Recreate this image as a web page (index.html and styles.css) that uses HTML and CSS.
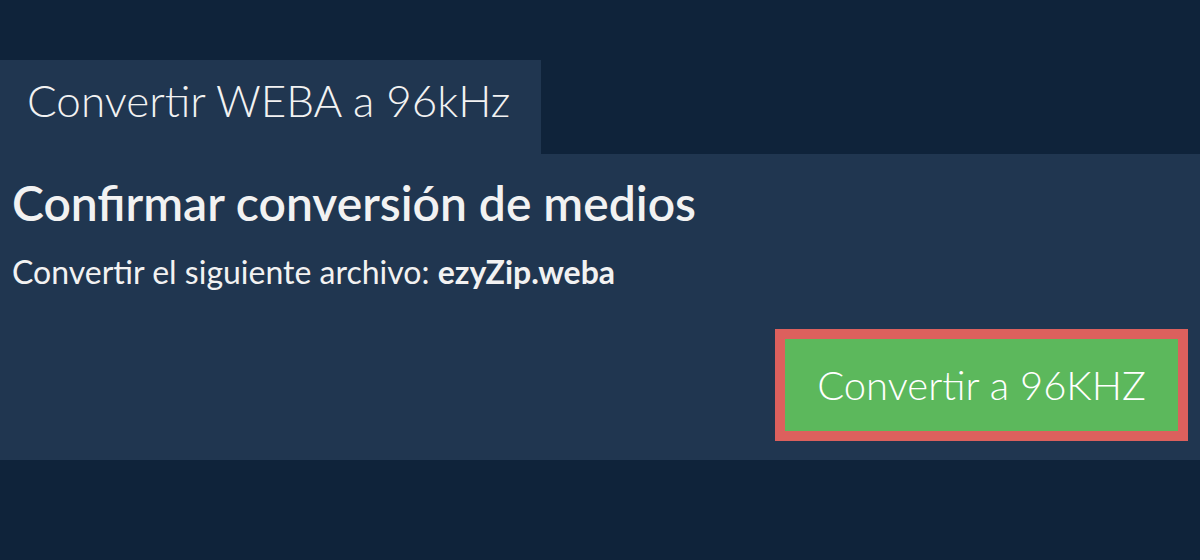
FILE: index.html
```html
<!DOCTYPE html>
<html lang="es">
<head>
    <meta charset="UTF-8">
    <meta name="viewport" content="width=device-width, initial-scale=1.0">
    <title>Convertir WEBA a 96kHz</title>
    <link rel="stylesheet" href="styles.css">
</head>
<body>
    <div class="page">
        <div class="tab">Convertir WEBA a 96kHz</div>
        <div class="panel">
            <h1>Confirmar conversión de medios</h1>
            <p>Convertir el siguiente archivo: <b>ezyZip.weba</b></p>
            <div class="actions">
                <button class="btn">Convertir a 96KHZ</button>
            </div>
        </div>
    </div>
</body>
</html>
```

FILE: styles.css
```css
*{
    margin: 0;
    padding: 0;
    box-sizing: border-box;
}
body{
    background-color: #0f233a;
    font-family: Lato, "Liberation Sans", sans-serif;
    color: #f2f2f2;
}
.page{
    padding-top: 60px;
}
.tab{
    display: inline-block;
    width: 541px;
    height: 94px;
    padding: 0 27px;
    line-height: 80px;
    font-size: 44px;
    font-weight: 300;
    white-space: nowrap;
    background-color: #203650;
}
.panel{
    background-color: #203650;
    height: 306px;
    padding: 20px 12px 0;
}
.panel h1{
    font-size: 48px;
    font-weight: 600;
    line-height: 58px;
}
.panel p{
    font-size: 32px;
    line-height: 38px;
    margin-top: 21px;
}
.panel p b{
    font-weight: 700;
}
.actions{
    display: flex;
    justify-content: flex-end;
    margin-top: 38px;
}
.btn{
    width: 413px;
    height: 112px;
    border: 10px solid #dc605d;
    background-color: #5cb85c;
    color: #fff;
    font-family: Lato, "Liberation Sans", sans-serif;
    font-size: 40px;
    font-weight: 300;
}
```
